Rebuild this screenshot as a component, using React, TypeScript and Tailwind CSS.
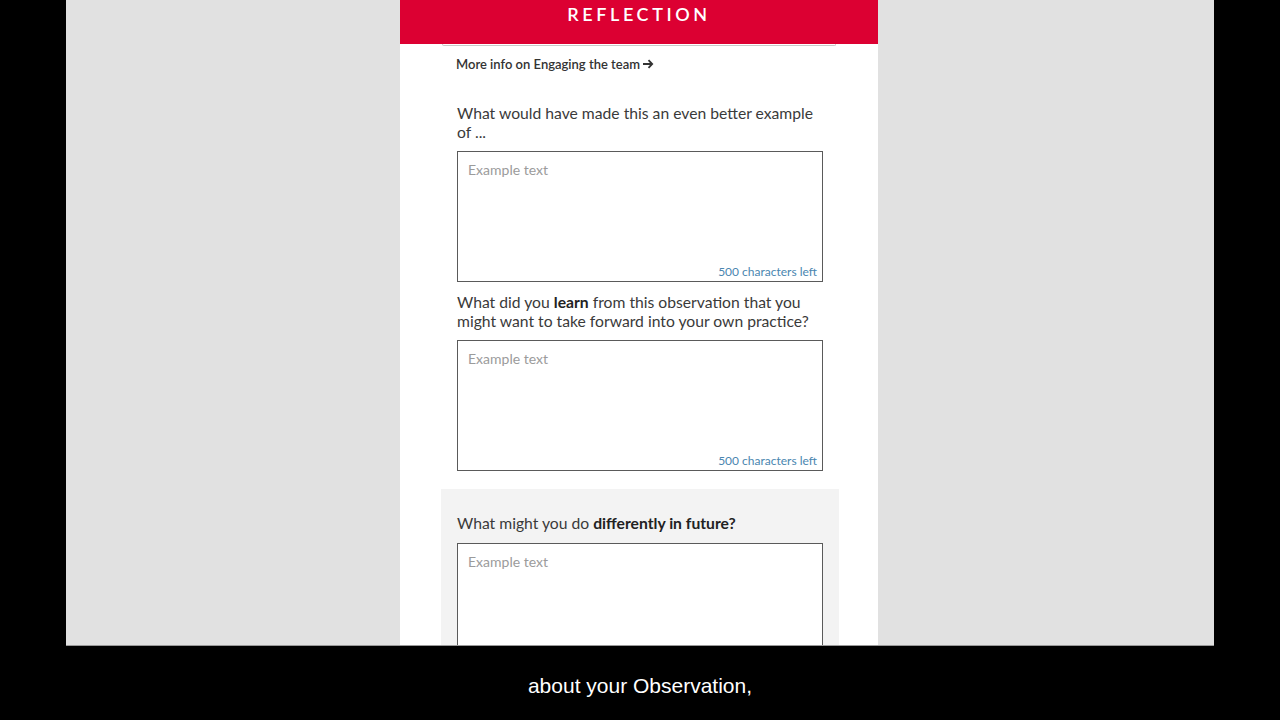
import React from "react";

interface Question {
  label: React.ReactNode;
  shaded?: boolean;
}

const questions: Question[] = [
  { label: <>What would have made this an even better example of ...</> },
  {
    label: (
      <>
        What did you <b className="font-bold text-[#222]">learn</b> from this observation that you
        might want to take forward into your own practice?
      </>
    ),
  },
  {
    label: (
      <>
        What might you do <b className="font-bold text-[#222]">differently in future?</b>
      </>
    ),
    shaded: true,
  },
];

function TextBox() {
  return (
    <div className="h-[131px] border border-[#5a5a5a] bg-white flex flex-col pl-[10px] pr-[5px] pt-[8px] pb-[1px]">
      <span className="text-[14px] leading-[20px] text-[#9b9b9b]">Example text</span>
      <span className="mt-auto self-end text-[12px] leading-[16px] text-[#4a86b0]">
        500 characters left
      </span>
    </div>
  );
}

function Field({ q }: { q: Question }) {
  return (
    <div className="px-[16px]">
      <p className={`text-[15.7px] leading-[19px] text-[#3a3a3a] ${q.shaded ? "mb-[10px]" : "mb-[9px]"}`}>
        {q.label}
      </p>
      <TextBox />
    </div>
  );
}

export default function App() {
  return (
    <div
      className="w-[1280px] h-[720px] bg-black flex flex-col overflow-hidden"
      style={{ fontFamily: "Lato, 'Noto Sans', sans-serif" }}
    >
      <div className="h-[646px] mx-[66px] bg-[#e1e1e1] flex overflow-hidden border-b border-[#999]">
        <div className="ml-[334px] w-[478px] bg-white flex flex-col">
          <div className="h-[44px] shrink-0 bg-[#dc0032] flex justify-center">
            <span className="text-white text-[18px] leading-[24px] pt-[2px] font-semibold tracking-[0.2em]">
              REFLECTION
            </span>
          </div>
          <div className="mx-[42px] h-[2px] shrink-0 border-b border-x border-[#c8c8c8] rounded-b-sm" />

          <div className="ml-[41px] w-[398px] flex flex-col">
            <a className="mt-[9px] pl-[15px] text-[13px] leading-[18px] font-semibold text-[#333] flex items-center gap-[2px]">
              More info on Engaging the team
              <svg width="12" height="12" viewBox="0 0 12 12" fill="none" stroke="#333" strokeWidth="1.8">
                <path d="M1 6h9M6.5 2.2 10.2 6 6.5 9.8" />
              </svg>
            </a>

            <div className="mt-[31px] flex flex-col gap-[11px]">
              <Field q={questions[0]} />
              <Field q={questions[1]} />
            </div>

            <div className="mt-[18px] bg-[#f3f3f3] pt-[25px] pb-[20px]">
              <Field q={questions[2]} />
            </div>
          </div>
        </div>
      </div>

      <div className="flex-1 flex items-center justify-center pt-[6px]">
        <span
          className="text-white text-[21px] leading-[26px]"
          style={{ fontFamily: "'Liberation Sans', Arial, sans-serif" }}
        >
          about your Observation,
        </span>
      </div>
    </div>
  );
}
